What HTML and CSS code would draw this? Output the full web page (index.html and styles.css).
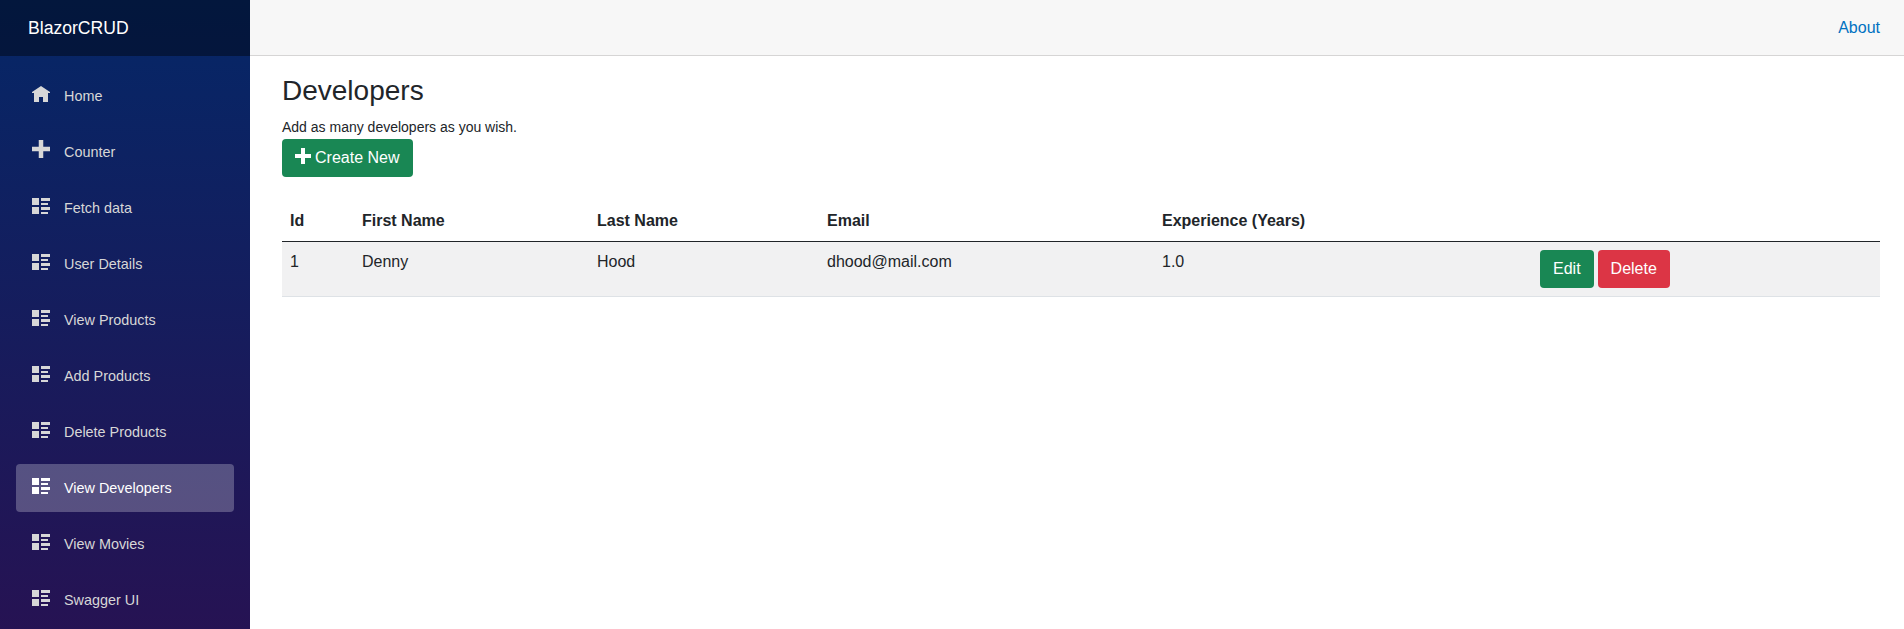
FILE: index.html
```html
<!DOCTYPE html>
<html lang="en">
<head>
<meta charset="utf-8">
<title>BlazorCRUD</title>
<link rel="stylesheet" href="styles.css">
</head>
<body>
<svg class="sprite" aria-hidden="true">
  <symbol id="home" viewBox="0 0 18 18"><path d="M9 2L0 8v1h2v9h5v-5h4v5h5V9h2V8z"/></symbol>
  <symbol id="plus" viewBox="0 0 8 8"><path d="M3 0v3H0v2h3v3h2V5h3V3H5V0z"/></symbol>
  <symbol id="list" viewBox="0 0 18 18"><path d="M0 2h7v7H0zM0 11h7v7H0zM9 2h9v3H9zM9 7h7v2H9zM9 11h9v3H9zM9 16h7v2H9z"/></symbol>
</svg>
<div class="page">
  <aside class="sidebar">
    <div class="brand"><a href="#">BlazorCRUD</a></div>
    <nav class="nav">
      <a class="nav-link" href="#"><svg class="icon"><use href="#home"/></svg>Home</a>
      <a class="nav-link" href="#"><svg class="icon"><use href="#plus"/></svg>Counter</a>
      <a class="nav-link" href="#"><svg class="icon"><use href="#list"/></svg>Fetch data</a>
      <a class="nav-link" href="#"><svg class="icon"><use href="#list"/></svg>User Details</a>
      <a class="nav-link" href="#"><svg class="icon"><use href="#list"/></svg>View Products</a>
      <a class="nav-link" href="#"><svg class="icon"><use href="#list"/></svg>Add Products</a>
      <a class="nav-link" href="#"><svg class="icon"><use href="#list"/></svg>Delete Products</a>
      <a class="nav-link active" href="#"><svg class="icon"><use href="#list"/></svg>View Developers</a>
      <a class="nav-link" href="#"><svg class="icon"><use href="#list"/></svg>View Movies</a>
      <a class="nav-link" href="#"><svg class="icon"><use href="#list"/></svg>Swagger UI</a>
    </nav>
  </aside>
  <main class="main">
    <header class="top-row"><a href="#">About</a></header>
    <section class="content">
      <h3 class="title">Developers</h3>
      <p class="lead">Add as many developers as you wish.</p>
      <a class="btn success create" href="#"><svg class="btn-icon"><use href="#plus"/></svg>Create New</a>
      <table class="table">
        <colgroup><col class="c-id"><col class="c-first"><col class="c-last"><col class="c-email"><col class="c-exp"><col></colgroup>
        <thead>
          <tr><th>Id</th><th>First Name</th><th>Last Name</th><th>Email</th><th>Experience (Years)</th><th></th></tr>
        </thead>
        <tbody>
          <tr>
            <td>1</td><td>Denny</td><td>Hood</td><td>dhood@mail.com</td><td>1.0</td>
            <td><div class="actions"><a class="btn success" href="#">Edit</a><a class="btn danger" href="#">Delete</a></div></td>
          </tr>
        </tbody>
      </table>
    </section>
  </main>
</div>
</body>
</html>
```
FILE: styles.css
```css
*, *::before, *::after { box-sizing: border-box; }
html, body { height: 100%; }
body {
  margin: 0;
  overflow: hidden;
  background: #fff;
  color: #212529;
  font: 16px/1.5 "Liberation Sans", Arial, sans-serif;
}
a { text-decoration: none; }
.sprite { display: none; }
.page { display: flex; height: 100%; }

.sidebar {
  width: 250px;
  flex: none;
  background: linear-gradient(180deg, rgb(5, 39, 103) 0, #3a0647 1010px);
}
.brand {
  display: flex;
  align-items: center;
  height: 56px;
  padding: 0 28px;
  background: rgba(0, 0, 0, .4);
}
.brand a { color: #fff; font-size: 17.6px; }
.nav { display: flex; flex-direction: column; gap: 8px; padding: 16px; }
.nav-link {
  display: flex;
  flex: none;
  height: 48px;
  padding: 0 16px;
  border-radius: 4px;
  color: #d7d7d7;
  font-size: 14.4px;
  line-height: 48px;
}
.nav-link.active { background: rgba(255, 255, 255, .25); color: #fff; }
.icon { width: 18px; height: 18px; margin: 12px 14px 0 0; fill: currentColor; }

.main { flex: 1; min-width: 0; }
.top-row {
  display: flex;
  align-items: center;
  justify-content: flex-end;
  height: 56px;
  padding: 0 24px;
  background: #f7f7f7;
  border-bottom: 1px solid #d6d5d5;
}
.top-row a { color: #0071c1; }
.content { padding: 18px 24px 0 32px; }
.title { margin: 0 0 8px; font-size: 28px; font-weight: 400; line-height: 34px; }
.lead { margin: 0; padding-bottom: 1px; font-size: 14px; line-height: 22px; }

.btn {
  display: inline-flex;
  height: 38px;
  padding: 6px 12px;
  border: 1px solid transparent;
  border-radius: 4px;
  color: #fff;
  line-height: 24px;
}
.success { background: #198754; }
.danger { background: #dc3545; }
.btn-icon { width: 16px; height: 16px; margin: 2px 4px 0 0; fill: currentColor; }
.create { display: flex; width: 131px; margin-bottom: 24px; white-space: nowrap; }

.table { width: 100%; border-collapse: separate; border-spacing: 0; table-layout: fixed; }
.c-id { width: 72px; }
.c-first { width: 235px; }
.c-last { width: 230px; }
.c-email { width: 335px; }
.c-exp { width: 378px; }
.table th, .table td { padding: 8px; text-align: left; vertical-align: top; }
.table th { height: 41px; border-bottom: 1px solid #212529; }
.table td { background: #f1f1f2; border-bottom: 1px solid #dee2e6; }
.actions { display: flex; gap: 4px; }
```
